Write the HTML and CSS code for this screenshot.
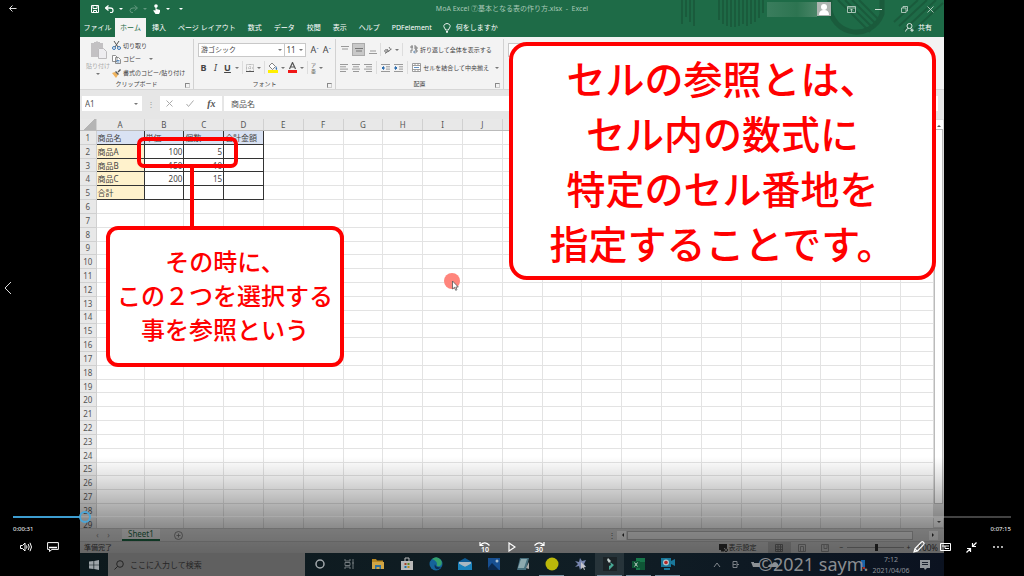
FILE: index.html
```html
<!DOCTYPE html>
<html lang="ja">
<head>
<meta charset="utf-8">
<title>MoA Excel</title>
<link rel="stylesheet" href="styles.css">
</head>
<body>
<main class="player">
  <div class="screen">
    <section class="excel">
      <header class="titlebar">
        <svg class="deco" viewBox="0 0 264 37" fill="none" stroke="#1a5b3c">
          <path d="M2 0v24M6 0v17M10 0v22M14 0v26M39 0v20M43 0v24M47 0v26M51 0v27M55 0v27M59 0v26M63 0v24M67 0v26M71 0v24M75 0v22M79 0v18M83 0v13" stroke-width="2"/>
          <path d="M150 0a27 27 0 0 0 52 14V0" stroke-width="5"/>
          <path d="M158 0l32 32M165 0l28 28M172 0l24 24M179 0l20 20M214 22l24-22M219 26l28-26M224 30l32-30M234 30l29-27" stroke-width="2"/>
        </svg>
        <div class="quick">
          <button class="ic" aria-label="保存"><svg width="8" height="8" viewBox="0 0 8 8" fill="none" stroke="#fff"><path d="M.5.5h7v7h-7zM2 .5v3h4v-3M2.500 7.500v-2h3v2"/></svg></button>
          <button class="ic" aria-label="元に戻す"><svg width="9" height="8" viewBox="0 0 9 8" fill="none" stroke="#fff" stroke-width="1.300"><path d="M3.500.5l-3 2.500 3 2.500M1 3h4q3 0 3 2.500T5 7.500"/></svg></button><i class="dd light"></i>
          <button class="ic faint" aria-label="やり直し"><svg width="9" height="8" viewBox="0 0 9 8" fill="none" stroke="#fff"><path d="M5.500.5l3 2.500-3 2.500M8 3H4Q1 3 1 5.500T4 7.500"/></svg></button><i class="dd light faint"></i>
          <button class="ic" aria-label="タッチ"><svg width="8" height="10" viewBox="0 0 8 10" fill="#fff"><circle cx="3" cy="2" r="1.800"/><path d="M2.500 2h1v3l3.500 1v2l-1 2H2.500L.5 7V6l2 .5z"/></svg></button><i class="dd light"></i>
          <i class="dd light more"></i>
        </div>
        <h1 class="title">MoA Excel ⑦基本となる表の作り方.xlsx&ensp;-&ensp;Excel</h1>
        <div class="sys">
          <span class="account"></span>
          <svg class="avatar" width="14" height="14" viewBox="0 0 14 14"><path fill="#aeb5b1" d="M0 0h14v14H0z"/><circle cx="7" cy="5" r="3" fill="#fff"/><path fill="#fff" d="M2 13q0-5 5-5t5 5z"/></svg>
          <button class="ic" aria-label="リボンの表示"><svg width="9" height="7" viewBox="0 0 9 7" fill="none" stroke="#c9d9d0"><path d="M.5.5h8v6h-8zM.5 2h8M4.500 6V3M3 4.500L4.500 3 6 4.500" stroke-width=".8"/></svg></button>
          <button class="ic" aria-label="最小化"><svg width="7" height="7" viewBox="0 0 7 7" stroke="#c9d9d0"><path d="M0 3.500h7"/></svg></button>
          <button class="ic" aria-label="元のサイズ"><svg width="7" height="7" viewBox="0 0 7 7" fill="none" stroke="#c9d9d0" stroke-width=".8"><path d="M.5 2h4.500v4.500H.5zM2 2V.5h4.500V5H5"/></svg></button>
          <button class="ic" aria-label="閉じる"><svg width="7" height="7" viewBox="0 0 7 7" stroke="#c9d9d0" stroke-width=".8"><path d="M.5.5l6 6M6.500.5l-6 6"/></svg></button>
        </div>
        <nav class="tabs">
          <button>ファイル</button><button class="on">ホーム</button><button>挿入</button><button>ページ レイアウト</button><button>数式</button><button>データ</button><button>校閲</button><button>表示</button><button>ヘルプ</button><button>PDFelement</button>
          <button class="tell"><svg width="8" height="10" viewBox="0 0 8 10" fill="none" stroke="#fff" stroke-width=".9"><path d="M2.500 7Q2.500 6 1.500 5 .5 3.500 1 2.300 2 .5 4 .5T7 2.300Q7.500 3.500 6.500 5q-1 1-1 2zM3 8.500h2M3.200 9.600h1.600"/></svg>何をしますか</button>
          <button class="share"><svg width="9" height="9" viewBox="0 0 9 9" fill="none" stroke="#fff" stroke-width=".8"><circle cx="4.500" cy="3" r="2.500"/><path d="M.5 8.500Q1 5.500 3.500 5.500M5.500 5.500l1 1M7 5.500v3.500M5.300 7.200h3.500"/></svg>共有</button>
        </nav>
      </header>

      <div class="ribbon">
        <section class="group clip">
          <div class="gbody">
            <button class="paste"><svg width="17" height="18" viewBox="0 0 17 18"><path fill="#c3c1c3" d="M1 2h3V1h2q1-2 2 0h2v1h3v5H8v9H1z"/><path fill="#eeedf0" stroke="#bdbbbd" d="M8.500 7.500h5l3 3v7h-8z"/></svg><span>貼り付け</span><i class="dd"></i></button>
            <div class="stack">
              <button><svg width="9" height="9" viewBox="0 0 9 9" fill="none"><path stroke="#555" d="M2 0l4 6M7 0L3 6"/><circle cx="2" cy="7" r="1.500" stroke="#3b77b5"/><circle cx="7" cy="7" r="1.500" stroke="#3b77b5"/></svg>切り取り</button>
              <button><svg width="9" height="9" viewBox="0 0 9 9" fill="#fff" stroke="#777" stroke-width=".8"><path d="M.5.5h3l1.500 1.500v4.500H.5zM3.500 2.500h3L8.500 4.500v4h-5z"/><path stroke="#3b77b5" d="M4.500 5.500h3M4.500 7h3"/></svg>コピー<i class="dd"></i></button>
              <button><svg width="9" height="9" viewBox="0 0 9 9"><path fill="#f0b35c" d="M0 4l3-1 3 3-2 3z"/><path fill="#555" d="M3 3l1-1 3 3-1 1zM5.500 2.500L8 0l1 1-2.500 2.500z"/></svg>書式のコピー/貼り付け</button>
            </div>
          </div>
          <footer>クリップボード<i class="launch"></i></footer>
        </section>
        <section class="group font">
          <div class="gbody col">
            <div class="line">
              <button class="combo wide">游ゴシック<i class="dd"></i></button><button class="combo size">11<i class="dd"></i></button>
              <button class="big">A<sup>ˆ</sup></button><button class="big">A<sup>ˇ</sup></button>
            </div>
            <div class="line">
              <button><b>B</b></button><button><em>I</em></button><button><u>U</u></button><i class="dd"></i><i class="sep"></i>
              <button aria-label="罫線"><svg width="8" height="8" viewBox="0 0 8 8" fill="none" stroke="#aaa" stroke-dasharray="1 1"><path d="M.5.5h7v7h-7zM4 0v8M0 4h8"/><path stroke="#555" stroke-dasharray="none" d="M0 7.500h8"/></svg></button><i class="dd"></i><i class="sep"></i>
              <button aria-label="塗りつぶし"><svg width="10" height="11" viewBox="0 0 10 11"><path fill="#fff" stroke="#666" stroke-width=".8" d="M1 4l3-3 3.500 3.500L4.500 7.500z"/><path fill="#3b77b5" d="M8 4q2 3 .5 4Q7 7 8 4z"/><path fill="#ffef00" d="M0 8h10v3H0z"/></svg></button><i class="dd"></i>
              <button aria-label="文字の色"><svg width="9" height="11" viewBox="0 0 9 11"><path fill="none" stroke="#555" stroke-width="1.200" d="M1.500 7l3-6.500 3 6.500M2.500 5h4"/><path fill="#f01818" d="M0 8h9v3H0z"/></svg></button><i class="dd"></i><i class="sep"></i>
              <button class="ruby">ア<br>亜</button><i class="dd"></i>
            </div>
          </div>
          <footer>フォント<i class="launch"></i></footer>
        </section>
        <section class="group align">
          <div class="gbody col">
            <div class="line">
              <button class="al" aria-label="上揃え"><svg width="8" height="8" viewBox="0 0 8 8" stroke="#999"><path d="M0 .5h8M1 3h6"/></svg></button>
              <button class="al pressed" aria-label="上下中央揃え"><svg width="8" height="8" viewBox="0 0 8 8" stroke="#777"><path d="M0 2.500h8M1 5h6"/></svg></button>
              <button class="al" aria-label="下揃え"><svg width="8" height="8" viewBox="0 0 8 8" stroke="#999"><path d="M1 5h6M0 7.500h8"/></svg></button><i class="sep"></i>
              <button aria-label="方向"><svg width="8" height="8" viewBox="0 0 8 8" fill="none" stroke="#777"><circle cx="2" cy="5" r="1.300"/><path d="M3 3l2 3M5 1l2 3M1 7.500L7.500 3"/></svg></button><i class="dd"></i><i class="sep"></i>
              <button class="txt"><svg width="8" height="9" viewBox="0 0 8 9" fill="none" stroke="#666" stroke-width=".8"><path d="M2 0v4M0 2h3M5 0v4h2V2H5M1 8V5h2M5 5h2v2H4"/><path stroke="#3b77b5" d="M5 5.500L3.500 7 5 8.500"/></svg>折り返して全体を表示する</button>
            </div>
            <div class="line">
              <button class="al" aria-label="左揃え"><svg width="8" height="8" viewBox="0 0 8 8" stroke="#999"><path d="M0 .5h8M0 2.800h6M0 5.100h8M0 7.500h6"/></svg></button>
              <button class="al" aria-label="中央揃え"><svg width="8" height="8" viewBox="0 0 8 8" stroke="#999"><path d="M0 .5h8M1 2.800h6M0 5.100h8M1 7.500h6"/></svg></button>
              <button class="al" aria-label="右揃え"><svg width="8" height="8" viewBox="0 0 8 8" stroke="#999"><path d="M0 .5h8M2 2.800h6M0 5.100h8M2 7.500h6"/></svg></button><i class="sep"></i>
              <button class="al" aria-label="インデントを減らす"><svg width="9" height="8" viewBox="0 0 9 8" stroke="#999"><path d="M0 .5h9M5 2.800h4M5 5.100h4M0 7.500h9"/><path stroke="#2f6fb0" fill="#2f6fb0" d="M4 4H1l1.500-1.500v3L1 4"/></svg></button>
              <button class="al" aria-label="インデントを増やす"><svg width="9" height="8" viewBox="0 0 9 8" stroke="#999"><path d="M0 .5h9M5 2.800h4M5 5.100h4M0 7.500h9"/><path stroke="#2f6fb0" fill="#2f6fb0" d="M0 4h3L1.500 2.500v3L3 4"/></svg></button><i class="sep"></i>
              <button class="txt"><svg width="9" height="9" viewBox="0 0 9 9" fill="#fff" stroke="#888" stroke-width=".8"><path d="M.5.5h8v8h-8zM3 .5v2M6 .5v2M3 6.500v2M6 6.500v2M.5 2.500h8M.5 6.500h8"/><path stroke="#3b77b5" d="M2 4.500h5"/></svg>セルを結合して中央揃え<i class="dd"></i></button>
            </div>
          </div>
          <footer>配置<i class="launch"></i></footer>
        </section>
        <section class="group rest"><span class="combo"></span></section>
      </div>

      <div class="formula">
        <label class="namebox"><input type="text" value="A1" aria-label="名前ボックス"><i class="dd"></i></label>
        <span class="grip">⋮</span>
        <div class="fx">
          <svg width="7" height="7" viewBox="0 0 7 7" stroke="#aaa"><path d="M.5.5l6 6M6.500.5l-6 6"/></svg>
          <svg width="8" height="7" viewBox="0 0 8 7" fill="none" stroke="#aaa"><path d="M.5 4l2 2.500L7.500.5"/></svg>
          <em>fx</em>
        </div>
        <input class="entry" type="text" value="商品名" aria-label="数式バー">
      </div>

      <div class="sheet">
        <div class="cells"><table class="grid" id="grid"></table></div>
        <div class="vbar"><span class="arrow up"></span><span class="thumb"></span><span class="arrow down"></span></div>
      </div>

      <div class="sheetbar">
        <span class="nav">‹</span><span class="nav">›</span>
        <button class="sheettab">Sheet1</button>
        <button class="ic" aria-label="新しいシート"><svg width="9" height="9" viewBox="0 0 9 9" fill="none" stroke="#777" stroke-width=".8"><circle cx="4.500" cy="4.500" r="4"/><path d="M4.500 2.500v4M2.500 4.500h4"/></svg></button>
        <div class="hbar"><span class="dots">⋮</span><span class="arrow left"></span><span class="hthumb"></span><span class="arrow right"></span></div>
      </div>
      <div class="status">
        <span>準備完了</span>
        <div class="views">
          <span class="disp"><svg width="9" height="8" viewBox="0 0 9 8"><path fill="#333" d="M0 0h8v4H5v2H0zM2 6h3v1.500H2z"/><circle cx="7" cy="6" r="1.500" fill="none" stroke="#333"/></svg>表示設定</span>
          <span class="view sel"><svg width="8" height="8" viewBox="0 0 8 8" fill="none" stroke="#777"><path d="M.5.5h7v7h-7zM3 0v8M5.500 0v8M0 3h8M0 5.500h8"/></svg></span>
          <span class="view"><svg width="8" height="8" viewBox="0 0 8 8" fill="none" stroke="#999"><path d="M.5.5h7v7h-7zM2.500 2.500h3v5h-3z"/></svg></span>
          <span class="view"><svg width="8" height="8" viewBox="0 0 8 8" fill="none" stroke="#999"><path d="M.5.5h7v7h-7zM3 0v4.500h3V0"/></svg></span>
          <span class="sign">−</span><span class="zoomtrack"></span><span class="sign">+</span><span class="pct">100%</span>
        </div>
      </div>
      <div class="shade"></div>
    </section>

    <footer class="taskbar">
      <button class="start" aria-label="スタート"><svg width="10" height="10" viewBox="0 0 10 10" fill="#9da4a8"><path d="M0 1.500L4.500 1v3.700H0zM5.200.9L10 0v4.700H5.200zM0 5.300h4.500V9L0 8.500zM5.200 5.300H10V10l-4.800-.9z"/></svg></button>
      <div class="search"><svg width="10" height="10" viewBox="0 0 10 10" fill="none" stroke="#252525"><circle cx="6" cy="4" r="3.300"/><path d="M3.700 6.300L.5 9.500"/></svg><span>ここに入力して検索</span></div>
      <div class="apps">
        <span><svg viewBox="0 0 14 14" fill="none" stroke="#a3a9ac" stroke-width="1.500"><circle cx="7" cy="7" r="4"/></svg></span>
        <span><svg viewBox="0 0 14 14" fill="none" stroke="#70787c"><path d="M3 2v2h5V2M3 12v-2h5v2M3 5.500h5v3H3zM11 2v10M10 6h2"/></svg></span>
        <span><svg viewBox="0 0 14 14"><path fill="#b98720" d="M1 2h4l1 1.500h6V12H1z"/><path fill="#d0a545" d="M1 5h12v7H1z"/><path fill="#2d6f9f" d="M4 8h6v4H8.500v-2h-3v2H4z"/></svg></span>
        <span><svg viewBox="0 0 14 14"><path fill="none" stroke="#bbb" d="M5 4V1h4v3"/><path fill="#b9b9b9" d="M1 4h12v9H1z"/><path fill="#a4442b" d="M4.500 6h2v2h-2z"/><path fill="#5e8a20" d="M7.500 6h2v2h-2z"/><path fill="#1b74a5" d="M4.500 9h2v2h-2z"/><path fill="#b98a17" d="M7.500 9h2v2h-2z"/></svg></span>
        <span><svg viewBox="0 0 14 14"><circle cx="7" cy="7" r="6.500" fill="#15639a"/><path fill="#35a06c" d="M3 2q5-4 9 1 2 4-1 6-4 1-3-2 0-3-5-5z"/><path fill="#0d2f56" d="M6 7q1 4 6 3-3 4-6 1-1-2 0-4z"/></svg></span>
        <span><svg viewBox="0 0 14 14"><path fill="#0f5c95" d="M0 5l7-4 7 4v8H0z"/><path fill="#a9b8c2" d="M1 5h12v3l-6 2-6-2z"/><path fill="#1b83bc" d="M0 6l7 4 7-4v7H0z"/></svg></span>
        <span><svg viewBox="0 0 14 14"><path fill="#174f91" d="M1 1h12v12H1z"/><path fill="#0b294e" d="M1 11l4-5 7 7H1z"/><circle cx="10" cy="4" r="1.500" fill="#a5bdd0"/></svg></span>
        <span><svg viewBox="0 0 14 14"><path fill="#476f7d" d="M4 1h9l-3 12H1z"/><path fill="#8daab0" d="M5 2h6L8 11H2z"/><path fill="#aaa" d="M10 11l3-6v7z"/></svg></span>
        <span class="run"><svg viewBox="0 0 14 14"><circle cx="7" cy="7" r="6.500" fill="#bbb80a"/></svg></span>
        <span><svg viewBox="0 0 14 14"><path fill="#7887b0" d="M6 1l2 3 4-1-2 4 2 3-4-1-2 4-1-4-4 1 3-3-3-3 4 1z"/><path fill="#c5c5ca" d="M7 5l5 5-2 .3 1 2.500-1 .3-1-2.500-2 1.400z"/></svg></span>
        <span class="run cur"><svg viewBox="0 0 14 14"><path fill="#1b2327" d="M0 0h14v14H0z"/><path fill="#c4d0cd" d="M5 1l3 3-2 2-2-3z"/><path fill="#48a794" d="M7 5l4 3-5 5V9l2-1z"/></svg></span>
        <span class="run"><svg viewBox="0 0 14 14"><path fill="#17764a" d="M4 1h9v12H4z"/><path fill="#0f5636" d="M8 5h5v8H8zM0 4h8v7H0z"/><path stroke="#c0cec7" d="M2.500 5.500l3 4M5.500 5.500l-3 4"/></svg></span>
        <span class="run"><svg viewBox="0 0 14 14"><path fill="#19779a" d="M0 1h10v3l4-2v7l-4-2v3H0zM3 11h6v2H3z"/><circle cx="5" cy="5.500" r="3" fill="#b9c5c9"/><circle cx="5" cy="5.500" r="1.800" fill="#b62727"/></svg></span>
      </div>
      <div class="tray">
        <svg width="8" height="6" viewBox="0 0 8 6" fill="none" stroke="#81878d"><path d="M1 5l3-4 3 4"/></svg>
        <svg width="8" height="9" viewBox="0 0 8 9" fill="none" stroke="#7b8187"><path d="M1 1.500h4v6H1zM5 4.500h2M1 4.500h3"/></svg>
        <div class="marks"><svg width="114" height="10" viewBox="0 0 114 10"><path fill="#8b9095" d="M0 2h3v1h6v4H2zM17 7h10v-3q-3-4-6 0-4 0-4 3z"/><path fill="#1764a8" d="M110 0h4v7h-4z"/><path fill="#a82b2b" d="M112 7h2v2h-2z"/></svg><strong class="watermark">©2021 saym.</strong></div>
        <div class="clock"><span>7:12</span><span>2021/04/06</span></div>
        <svg width="10" height="10" viewBox="0 0 10 10"><path fill="#92979d" d="M0 0h10v8H7L5 10 4 8H0z"/><path stroke="#1b2230" d="M2 2.500h6M2 4.500h6"/></svg>
      </div>
    </footer>

    <div class="mark-box"></div>
    <div class="mark-line"></div>
    <p class="callout small">その時に、<br>この２つを選択する<br>事を参照という</p>
    <p class="callout large">セルの参照とは、<br>セル内の数式に<br>特定のセル番地を<br>指定することです。</p>
    <svg class="pointer" width="16" height="18" viewBox="0 0 16 18"><circle cx="8" cy="8" r="8" fill="#ff857c"/><path fill="#fff" stroke="#555" stroke-width=".8" d="M8.500 8v8l2-1.700 1.200 3 1.300-.6-1.200-2.700h2.500z"/></svg>
  </div>

  <button class="back" aria-label="戻る"><svg width="8" height="7" viewBox="0 0 8 7" fill="none" stroke="#ddd"><path d="M3.500.5l-3 3 3 3M.5 3.500h7"/></svg></button>
  <button class="prev" aria-label="前へ"><svg width="8" height="14" viewBox="0 0 8 14" fill="none" stroke="#ddd"><path d="M7 1L1 7l6 6"/></svg></button>

  <div class="controls">
    <input class="seek" type="range" min="0" max="435" value="29" aria-label="再生位置">
    <div class="times"><span>0:00:31</span><span>0:07:15</span></div>
    <div class="buttons">
      <div class="side">
        <button aria-label="音量"><svg width="12" height="10" viewBox="0 0 12 10" fill="none" stroke="#fff"><path d="M.5 3.500h2L5 1v8L2.500 6.500h-2zM6.500 3.500q1 1.500 0 3M8.200 2q2 3 0 6M10 .8q3 4.200 0 8.400"/></svg></button>
        <button aria-label="字幕"><svg width="12" height="10" viewBox="0 0 12 10" fill="none" stroke="#fff"><path d="M.6.6h10.800v6.800H5L2.500 9.500V7.400H.6z"/><path d="M2 5.500h8" stroke-width="1.500"/></svg></button>
      </div>
      <div class="mid">
        <button class="skip"><svg width="12" height="5" viewBox="0 0 12 5" fill="none" stroke="#fff" stroke-width="1.200"><path d="M1 0v3.500h3.500M1.500 3Q6-1.500 10.500 3.500"/></svg><span>10</span></button>
        <button aria-label="再生"><svg width="8" height="10" viewBox="0 0 8 10" fill="none" stroke="#fff" stroke-width="1.200"><path d="M1 1l6 4-6 4z"/></svg></button>
        <button class="skip"><svg width="12" height="5" viewBox="0 0 12 5" fill="none" stroke="#fff" stroke-width="1.200"><path d="M11 0v3.500H7.500M10.500 3Q6-1.500 1.500 3.500"/></svg><span>30</span></button>
      </div>
      <div class="side right">
        <button aria-label="編集"><svg width="12" height="12" viewBox="0 0 12 12" fill="none" stroke="#fff" stroke-width="1.200"><path d="M1 11l1-3.500L8.500 1q1-.8 2 .3t.3 2L4.500 10zM2 8l2 2"/></svg></button>
        <button aria-label="ミニ表示"><svg width="11" height="8" viewBox="0 0 11 8" fill="none" stroke="#fff"><path d="M.5.5h10v7H.5zM2 3h7M5 5.500h4M5 3v2.500"/></svg></button>
        <button aria-label="全画面終了"><svg width="11" height="11" viewBox="0 0 11 11" fill="none" stroke="#fff" stroke-width="1.200"><path d="M10.500.5L6.500 4.500M6.500 1v3.500H10M.5 10.500l4-4M1 6.500h3.500V10"/></svg></button>
        <button aria-label="その他"><svg width="10" height="2" viewBox="0 0 10 2" fill="#fff"><circle cx="1" cy="1" r=".9"/><circle cx="5" cy="1" r=".9"/><circle cx="9" cy="1" r=".9"/></svg></button>
      </div>
    </div>
  </div>
</main>
<script src="grid.js"></script>
</body>
</html>
```
FILE: grid.js
```js
const data = [
  ['商品名', '単価', '個数', '合計金額'],
  ['商品A', '100', '5', ''],
  ['商品B', '150', '10', ''],
  ['商品C', '200', '15', ''],
  ['合計', '', '', '']
];
const columns = 21;
const letters = 'ABCDEFGHIJ';
let html = '<colgroup><col class="c-num"><col class="c-a">' + '<col>'.repeat(columns - 1) + '</colgroup>';
html += '<thead><tr><th class="corner"></th>';
for (let c = 0; c < columns; c++) html += `<th>${letters[c] || ''}</th>`;
html += '</tr></thead><tbody>';
for (let r = 0; r < 29; r++) {
  html += `<tr><th>${r + 1}</th>`;
  for (let c = 0; c < columns; c++) {
    const filled = r < 5 && c < 4;
    let cls = '';
    if (filled) {
      cls = 'box';
      if (r === 0) cls += ' head';
      else if (c === 0) cls += ' item';
      else cls += ' num';
    }
    html += `<td class="${cls}">${filled ? data[r][c] : ''}</td>`;
  }
  html += '</tr>';
}
document.getElementById('grid').innerHTML = html + '</tbody>';
```
FILE: styles.css
```css
* { box-sizing: border-box; }
html, body { height: 100%; margin: 0; }
body {
  background: #000;
  color: #444;
  font: 8px/12px "Noto Sans", "Noto Sans CJK JP", sans-serif;
  overflow: hidden;
}
button, input { font: inherit; color: inherit; background: none; border: 0; padding: 0; margin: 0; }
button { display: flex; align-items: center; white-space: nowrap; }
svg { display: block; flex: none; }
i { flex: none; }

.player { position: relative; min-height: 100vh; padding: 0 80px; display: flex; }
.screen { position: relative; flex: 1; min-width: 0; height: 100vh; display: flex; flex-direction: column; }
.excel { position: relative; flex: 1; min-height: 0; display: flex; flex-direction: column; background: #e6e6e6; overflow: hidden; }

.dd { width: 0; height: 0; border: 2px solid transparent; border-top-color: #777; border-bottom: 0; }
.dd.light { border-top-color: #fff; }
.faint { opacity: .3; }

/* title bar */
.titlebar { position: relative; background: #1e6b47; color: #fff; display: grid; grid-template-columns: 1fr auto 1fr; grid-template-rows: 18px 19px; }
.deco { position: absolute; right: 0; top: 0; width: 264px; height: 37px; }
.quick { display: flex; align-items: center; gap: 5px; padding-left: 10px; }
.quick .ic { margin-left: 1px; }
.quick .more { margin-left: 4px; }
.title { margin: 0; font-size: 7px; font-weight: 400; color: #a8c8b7; line-height: 18px; white-space: nowrap; }
.sys { position: relative; display: flex; justify-content: flex-end; align-items: center; gap: 19px; padding-right: 10px; }
.account { width: 50px; height: 15px; background: linear-gradient(90deg, #3a7d5d, #2d7451 60%, #4a8567); margin-right: -19px; }
.avatar { margin-right: -3px; }
.tabs { position: relative; grid-column: 1 / -1; display: flex; font-size: 7px; }
.tabs button { padding: 0 6px; justify-content: center; }
.tabs .on { background: #f3f3f3; color: #1e6b47; width: 31px; }
.tabs button:first-child { width: 35px; padding: 0; }
.tabs .tell { gap: 5px; padding-left: 5px; }
.tabs .share { gap: 4px; margin-left: auto; padding-right: 12px; }

/* ribbon */
.ribbon { height: 53px; flex: none; display: flex; background: #f3f3f3; border-bottom: 1px solid #d6d6d6; font-size: 6px; }
.group { display: flex; flex-direction: column; border-right: 1px solid #d2d2d2; margin: 2px 0 0; }
.group footer { position: relative; text-align: center; line-height: 9px; }
.launch { position: absolute; right: 3px; top: 3px; width: 5px; height: 5px; border: 1px solid #888; border-right-color: #ccc; border-bottom-color: #ccc; }
.clip { width: 114px; }
.font { width: 142px; }
.align { width: 168px; }
.rest { flex: 1; border: 0; padding: 4px; }
.gbody { flex: 1; display: flex; min-height: 0; padding: 0 4px; }
.col { flex-direction: column; padding-top: 3px; gap: 3px; }
.paste { width: 28px; flex-direction: column; color: #aaa; gap: 2px; padding-top: 2px; }
.paste span { line-height: 10px; }
.stack { display: flex; flex-direction: column; justify-content: space-around; }
.stack button { gap: 2px; height: 12px; }
.stack .dd { margin-left: 6px; }
.line { display: flex; align-items: center; height: 15px; gap: 4px; }
.combo { height: 14px; background: #fff; border: 1px solid #c8c8c8; padding: 0 2px; justify-content: space-between; }
.combo.wide { width: 87px; font-size: 7px; }
.combo.size { width: 23px; margin-left: -5px; font-size: 8px; }
.rest .combo { width: 70px; }
.big { font-size: 9px; }
.big sup { font-size: 6px; color: #3b77b5; line-height: 6px; }
.font .line + .line { padding-left: 1px; gap: 3px; }
.font b, .font em, .font u { width: 9px; font-size: 9px; text-align: center; }
.font u, .font b { font-weight: 700; }
.ruby { font-size: 5px; line-height: 6px; }
.sep { width: 1px; height: 13px; background: #ddd; }
.al { width: 9px; height: 13px; justify-content: center; }
.align .line { gap: 3px; }
.al.pressed { width: 13px; background: #c8c8c8; outline: 1px solid #aaa; outline-offset: -1px; }
.align .line + .line { gap: 4px; }
.txt { gap: 2px; width: 89px; margin-left: auto; }
.txt .dd { margin-left: 4px; }

/* formula bar */
.formula { height: 29px; flex: none; display: flex; align-items: center; padding: 0 6px 2px 2px; gap: 2px; color: #555; }
.namebox { width: 60px; height: 15px; background: #fff; display: flex; align-items: center; padding: 0 4px 0 3px; }
.namebox input { flex: 1; min-width: 0; }
.grip { width: 14px; text-align: center; color: #999; }
.fx { width: 62px; height: 15px; background: #fff; display: flex; align-items: center; justify-content: space-around; }
.fx em { font-family: "Liberation Serif", serif; font-size: 10px; font-weight: 700; }
.entry { flex: 1; min-width: 0; height: 15px; background: #fff; padding: 0 7px; }

/* sheet */
.sheet { flex: 1; min-height: 0; display: flex; }
.cells { flex: 1; min-width: 0; overflow: hidden; background: #fff; }
.grid { table-layout: fixed; border-collapse: collapse; width: calc(100% + 8px); height: calc(100% + 4px); line-height: 11px; }
.c-num { width: 16px; }
.c-a { width: 48px; }
.grid th { background: #e8e8e8; color: #555; font-weight: 400; padding: 0; border: 1px solid #d0d0d0; border-top: 0; border-left: 0; }
.grid thead th { border-bottom-color: #bbb; }
.grid .corner { background: linear-gradient(135deg, #e8e8e8 55%, #b4b4b4 55%); }
.grid td { padding: 0 1px; border: 1px solid #e3e3e3; overflow: hidden; white-space: nowrap; }
.grid .box { border-color: #333; }
.grid .head { background: #d9e2f3; }
.grid .item { background: #fff2cc; }
.grid .num { text-align: right; }
.vbar { width: 11px; padding: 1px; display: flex; flex-direction: column; background: #dcdcdc; }
.vbar .thumb { flex: 1; background: #fff; border: 1px solid #bbb; margin-bottom: 14px; }
.arrow { display: flex; width: 9px; height: 9px; align-items: center; justify-content: center; background: #fff; flex: none; }
.arrow::after { content: ""; border: 2px solid transparent; }
.up::after { border-bottom-color: #555; }
.down::after { border-top-color: #555; }
.left::after { border-right-color: #333; }
.right::after { border-left-color: #333; }

.sheetbar { height: 13px; flex: none; display: flex; align-items: center; padding: 0 6px 0 12px; background: #e0e0e0; border-top: 1px solid #ccc; }
.nav { width: 11px; text-align: center; color: #888; }
.sheettab { margin: 0 14px 0 8px; height: 12px; padding: 0 6px; background: #f4f4f4; color: #1e6b47; border-bottom: 2px solid #1e6b47; }
.hbar { margin-left: auto; width: 39%; display: flex; align-items: center; gap: 1px; }
.dots { width: 8px; color: #666; }
.hthumb { flex: 1; height: 9px; background: #f7f7f7; border: 1px solid #bbb; margin-right: 15px; }
.status { height: 12px; flex: none; display: flex; justify-content: space-between; align-items: center; padding: 0 6px 0 4px; background: #d8d8d8; border-top: 1px solid #c4c4c4; font-size: 7px; }
.views { display: flex; align-items: center; }
.disp { display: flex; align-items: center; gap: 1px; margin-right: 11px; }
.view { width: 23px; height: 11px; display: flex; align-items: center; justify-content: center; }
.view.sel { background: #bcbcbc; }
.sign { width: 10px; text-align: center; }
.zoomtrack { width: 57px; height: 7px; background: linear-gradient(90deg, transparent 28px, #333 28px, #333 31px, transparent 31px), linear-gradient(#999, #999) center / 100% 1px no-repeat; }
.pct { margin-left: 4px; font-size: 8px; }
.shade { position: absolute; inset: auto 0 0 0; height: 96px; background: linear-gradient(transparent, rgba(0,0,0,.12) 22px, rgba(0,0,0,.45) 70px, rgba(0,0,0,.53)); }

/* task bar */
.taskbar { height: 23px; flex: none; display: flex; background: linear-gradient(90deg, #0d191d, #101e25 60%, #0b1220); overflow: hidden; }
.start { width: 28px; justify-content: center; }
.search { width: 197px; background: #606060; color: #252525; display: flex; align-items: center; gap: 6px; padding-left: 6px; }
.apps { display: flex; }
.apps span { width: 29px; display: flex; align-items: center; justify-content: center; border-bottom: 1px solid transparent; }
.apps svg { width: 14px; height: 14px; }
.apps .run { border-image: linear-gradient(90deg, transparent 3px, #7790a0 3px, #7790a0 26px, transparent 26px) 1; border-width: 0 0 1px; border-style: solid; }
.apps .cur { background: #27343a; }
.tray { flex: 1; display: flex; align-items: center; justify-content: flex-end; gap: 11px; padding-right: 14px; }
.marks { position: relative; width: 114px; display: flex; align-items: center; }
.watermark { position: absolute; left: 7px; top: -6px; font-size: 18px; line-height: 20px; font-weight: 400; color: #8a8d91; white-space: nowrap; }
.clock { display: flex; flex-direction: column; align-items: center; width: 36px; font-size: 7px; line-height: 11px; color: #8d9299; margin-left: -3px; }

/* annotations over the recording */
.callout { position: absolute; margin: 0; background: #fff; border: 4px solid #f00; color: #f00; text-align: center; font-family: "Noto Sans CJK JP", sans-serif; font-weight: 500; white-space: nowrap; }
.callout.small { left: 26px; top: 226px; width: 238px; padding: 14px 0 17px; border-radius: 12px; font-size: 24px; line-height: 34px; }
.callout.large { right: 8px; top: 42px; width: 427px; padding: 4px 0 6px; border-radius: 18px; font-size: 39px; line-height: 55px; }
.mark-box { position: absolute; left: 57px; top: 137px; width: 101px; height: 31px; border: 4px solid #f00; border-radius: 7px; }
.mark-line { position: absolute; left: 110px; top: 164px; width: 4px; height: 64px; background: #f00; }
.pointer { position: absolute; left: 364px; top: 273px; }

/* player chrome */
.back { position: absolute; left: 9px; top: 5px; }
.prev { position: absolute; left: 4px; top: 50%; margin-top: -7px; }
.controls { position: absolute; inset: auto 0 0 0; padding: 0 13px 18px; color: #fff; }
.seek { display: block; width: 100%; height: 12px; appearance: none; }
.seek::-webkit-slider-runnable-track { height: 12px; background: linear-gradient(90deg, #3d9dd0 67px, rgba(190,190,190,.35) 67px) center / 100% 2px no-repeat; }
.seek::-webkit-slider-thumb { appearance: none; width: 12px; height: 12px; border: 2px solid #4ba5d6; border-radius: 50%; }
.times { display: flex; justify-content: space-between; font-size: 6px; line-height: 12px; }
.buttons { display: grid; grid-template-columns: 1fr auto 1fr; align-items: center; height: 22px; margin-top: 1px; }
.side { display: flex; align-items: center; gap: 15px; padding-left: 7px; }
.side.right { justify-content: flex-end; padding: 0 8px 0 0; }
.side.right button:last-child { margin-left: 1px; }
.mid { display: flex; align-items: center; gap: 17px; }
.skip { flex-direction: column; font-size: 7px; line-height: 6px; font-weight: 600; }
```
